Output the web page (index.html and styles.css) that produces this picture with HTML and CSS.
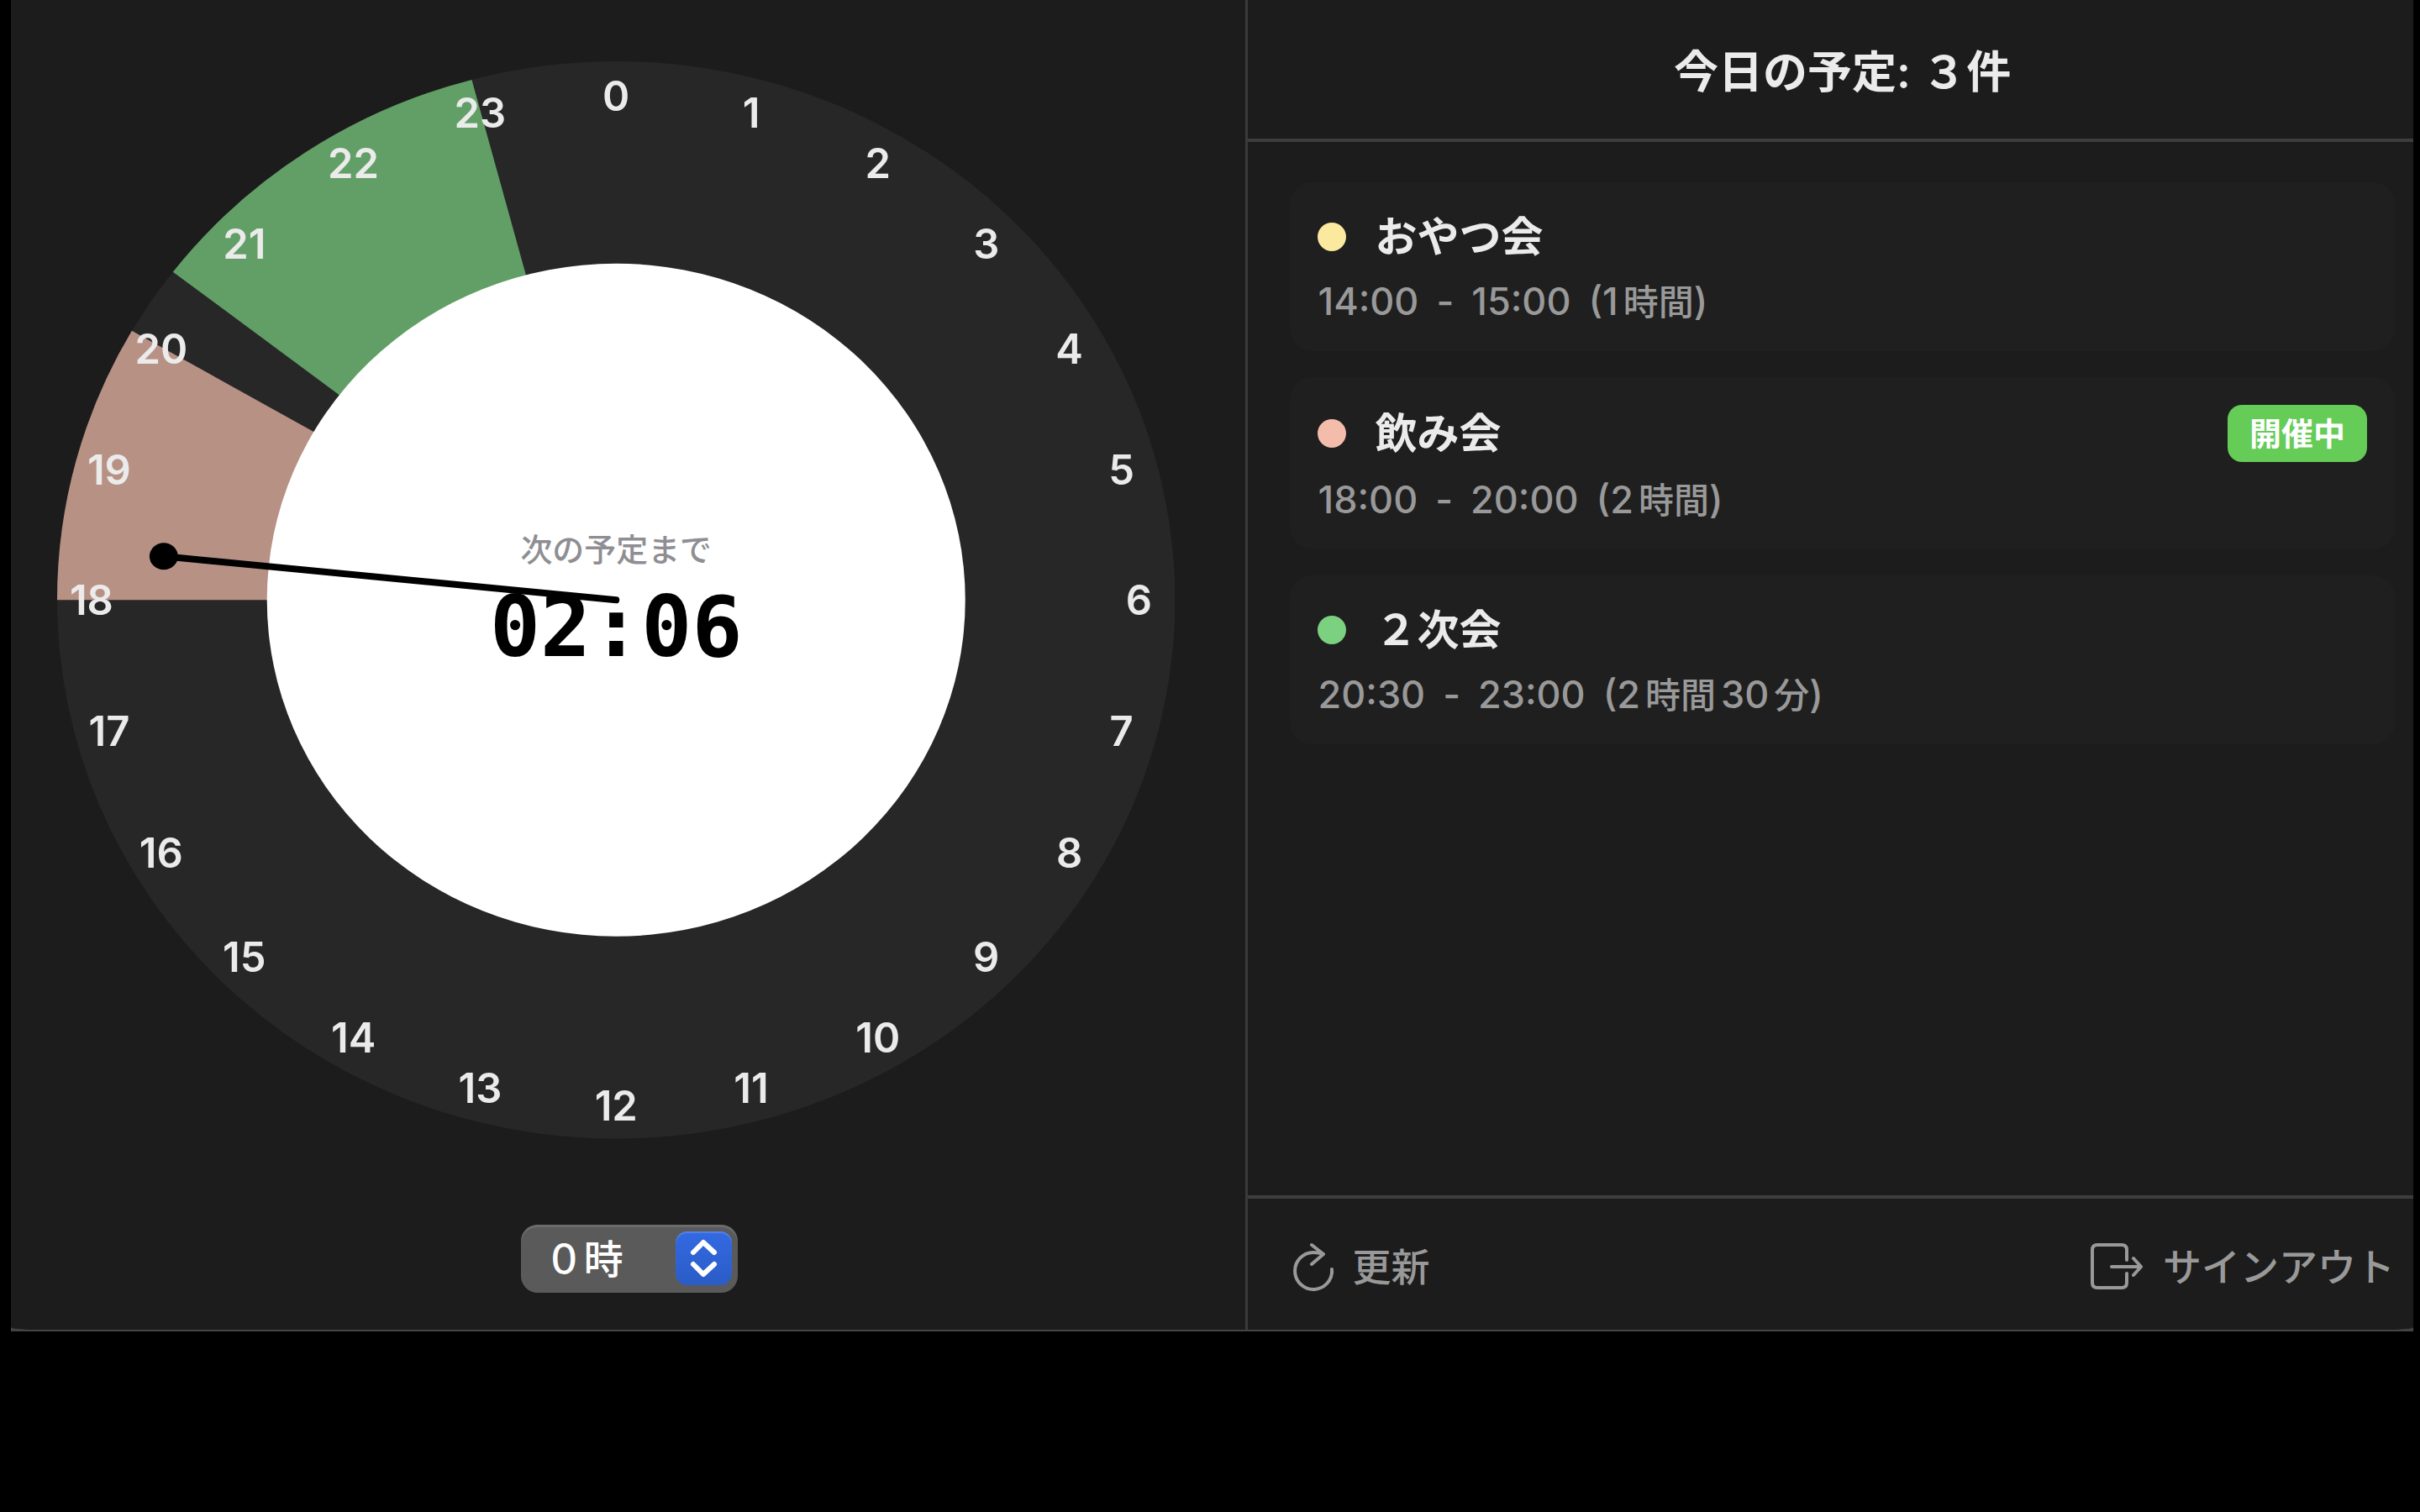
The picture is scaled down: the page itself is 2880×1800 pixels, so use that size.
FILE: index.html
```html
<!DOCTYPE html>
<html lang="ja">
<head>
<meta charset="utf-8">
<title>今日の予定</title>
<link rel="stylesheet" href="styles.css">
</head>
<body>
<div class="window">
  <div class="panes">
    <section class="clock-pane">
      <svg class="clock" viewBox="0 0 1332 1284" role="img" aria-label="24時間時計">
        <ellipse class="ring" cx="666" cy="642" rx="666" ry="642"/>
        <path class="slot-drinks" d="M666 642 L0 642 A666 642 0 0 1 89 321 Z"/>
        <path class="slot-second" d="M666 642 L138 251 A666 642 0 0 1 494 22 Z"/>
        <ellipse class="face" cx="666" cy="642" rx="416" ry="401"/>
        <g class="hours" transform="translate(0 18)">
          <text x="666" y="41">0</text>
          <text x="827" y="61">1</text>
          <text x="978" y="121">2</text>
          <text x="1107" y="217">3</text>
          <text x="1206" y="342">4</text>
          <text x="1268" y="487">5</text>
          <text x="1289" y="642">6</text>
          <text x="1268" y="798">7</text>
          <text x="1206" y="943">8</text>
          <text x="1107" y="1067">9</text>
          <text x="978" y="1163">10</text>
          <text x="827" y="1223">11</text>
          <text x="666" y="1244">12</text>
          <text x="504" y="1223">13</text>
          <text x="353" y="1163">14</text>
          <text x="223" y="1067">15</text>
          <text x="124" y="943">16</text>
          <text x="62" y="798">17</text>
          <text x="41" y="642">18</text>
          <text x="62" y="487">19</text>
          <text x="124" y="342">20</text>
          <text x="223" y="217">21</text>
          <text x="353" y="121">22</text>
          <text x="504" y="61">23</text>
        </g>
        <text class="next-label" x="666" y="596">次の予定まで</text>
        <text class="countdown" x="666" y="709">02:06</text>
        <path class="hand" d="M666 642 L127 590"/>
        <ellipse cx="127" cy="590" rx="17" ry="16"/>
      </svg>
      <div class="picker">
        <select class="picker-select" aria-label="開始時刻">
          <option>０時</option>
        </select>
        <span class="picker-arrows">
          <svg viewBox="0 0 67 64" aria-hidden="true"><path d="M21 25 L33 13 L46 25 M21 39 L33 51 L46 39"/></svg>
        </span>
      </div>
    </section>
    <section class="agenda">
      <header class="agenda-header"><h1>今日の予定: ３件</h1></header>
      <ul class="events">
        <li class="event">
          <div class="event-head"><span class="dot dot-yellow"></span><h2>おやつ会</h2></div>
          <p class="event-time"><span>14:00</span><span>-</span><span>15:00</span><span>(1<span class="unit">時間</span>)</span></p>
        </li>
        <li class="event">
          <div class="event-head"><span class="dot dot-pink"></span><h2>飲み会</h2><span class="badge">開催中</span></div>
          <p class="event-time"><span>18:00</span><span>-</span><span>20:00</span><span>(2<span class="unit">時間</span>)</span></p>
        </li>
        <li class="event">
          <div class="event-head"><span class="dot dot-green"></span><h2>２次会</h2></div>
          <p class="event-time"><span>20:30</span><span>-</span><span>23:00</span><span>(2<span class="unit unit-inner">時間</span>30<span class="unit">分</span>)</span></p>
        </li>
      </ul>
      <footer class="agenda-footer">
        <button class="action" type="button">
          <svg class="icon-refresh" viewBox="0 0 52 60" aria-hidden="true"><path d="M40 15 Q34 13 28 13 A22 22 0 1 0 50 33 M26 4 L40 15 L26 27"/></svg>
          更新
        </button>
        <button class="action" type="button">
          <svg class="icon-exit" viewBox="0 0 66 60" aria-hidden="true"><path d="M45 22 V10 Q45 4 39 4 H10 Q4 4 4 10 V49 Q4 55 10 55 H39 Q45 55 45 49 V38 M27 30 H62 M53 20 L62 30 L53 40"/></svg>
          サインアウト
        </button>
      </footer>
    </section>
  </div>
</div>
</body>
</html>
```
FILE: styles.css
```css
* {
  box-sizing: border-box;
}

body {
  margin: 0;
  background: #000;
  color: #ebebeb;
  font-family: Inter, "Noto Sans CJK JP", sans-serif;
}

h1,
h2,
p,
ul {
  margin: 0;
  padding: 0;
}

.window {
  margin: 0 8px 0 13px;
  padding-bottom: 2px;
  background: #444;
}

.panes {
  display: flex;
  background: #1c1c1c;
  border-radius: 0 0 28px 28px / 0 0 3px 3px;
}

/* clock */
.clock-pane {
  flex: 1471 1 0;
  min-width: 0;
  display: flex;
  flex-direction: column;
  align-items: center;
  gap: 102px;
  padding: 73px 0 44px;
}

.clock {
  display: block;
  align-self: stretch;
  margin: 0 84px 0 55px;
}

.ring {
  fill: #272727;
}

.slot-drinks {
  fill: #b89185;
}

.slot-second {
  fill: #629f66;
}

.face {
  fill: #fff;
}

.hours {
  fill: #ebebeb;
  font-size: 49px;
  font-weight: 600;
  text-anchor: middle;
}

.next-label {
  fill: #8e8e93;
  font-size: 38px;
  font-weight: 500;
  text-anchor: middle;
}

.countdown {
  fill: #000;
  font-family: "DejaVu Sans Mono", monospace;
  font-size: 100px;
  font-weight: 700;
  text-anchor: middle;
}

.hand {
  stroke: #000;
  stroke-width: 8px;
  stroke-linecap: round;
}

.picker {
  display: grid;
  align-items: center;
  width: 258px;
  margin-left: 2px;
}

.picker-select {
  grid-area: 1 / 1;
  width: 100%;
  height: 81px;
  padding: 0 80px 0 28px;
  appearance: none;
  border: 0;
  border-radius: 20px;
  background: #5a5a5a;
  box-shadow: inset 0 3px 1px #6c6c6c;
  color: #fff;
  font-family: inherit;
  font-size: 47px;
  font-weight: 500;
}

.picker-arrows {
  grid-area: 1 / 1;
  justify-self: end;
  width: 67px;
  height: 64px;
  margin-right: 7px;
  border-radius: 14px;
  background: linear-gradient(#3369e2, #2b5cc6);
  box-shadow: inset 0 2px 1px #5583e4;
  pointer-events: none;
}

.picker-arrows path {
  fill: none;
  stroke: #fff;
  stroke-width: 6px;
  stroke-linecap: round;
  stroke-linejoin: round;
}

/* agenda */
.agenda {
  flex: 1388 1 0;
  min-width: 0;
  display: flex;
  flex-direction: column;
  border-left: 3px solid #3a3a3a;
}

.agenda-header {
  padding: 46px 22px 39px 50px;
  border-bottom: 4px solid #3d3d3d;
  text-align: center;
}

h1 {
  font-size: 53px;
  line-height: 80px;
  font-weight: 600;
}

.events {
  flex: 1;
  display: flex;
  flex-direction: column;
  gap: 31px;
  padding: 48px 22px 48px 50px;
  list-style: none;
}

.event {
  display: flex;
  flex-direction: column;
  gap: 18px;
  padding: 33px 33px 32px;
  border-radius: 26px;
  background: #1f1f1f;
}

.event-head {
  display: flex;
  align-items: center;
  gap: 34px;
}

.dot {
  width: 34px;
  height: 34px;
  border-radius: 50%;
}

.dot-yellow {
  background: #fbe9a0;
}

.dot-pink {
  background: #f3bcab;
}

.dot-green {
  background: #7bd17f;
}

h2 {
  font-size: 50px;
  line-height: 64px;
  font-weight: 600;
}

.badge {
  margin-left: auto;
  padding: 0 26px;
  border-radius: 17px;
  background: #64cc57;
  color: #fff;
  font-size: 38px;
  line-height: 68px;
  font-weight: 700;
}

.event-time {
  display: flex;
  gap: 21px;
  color: #999;
  font-size: 45px;
  line-height: 54px;
  font-weight: 500;
}

.unit {
  margin-left: 6px;
  font-size: 42px;
  line-height: 1;
}

.unit-inner {
  margin-right: 6px;
}

.agenda-footer {
  display: flex;
  justify-content: space-between;
  align-items: center;
  padding: 48px 22px 42px 50px;
  border-top: 4px solid #3d3d3d;
}

.action {
  display: flex;
  align-items: center;
  gap: 22px;
  padding: 0;
  border: 0;
  background: none;
  color: #999;
  font-family: inherit;
  font-size: 46px;
  line-height: 66px;
  font-weight: 500;
}

.action svg {
  height: 60px;
  fill: none;
  stroke: currentColor;
  stroke-width: 4px;
  stroke-linecap: round;
  stroke-linejoin: round;
}

.icon-refresh {
  width: 52px;
}

.icon-exit {
  width: 66px;
}
```
